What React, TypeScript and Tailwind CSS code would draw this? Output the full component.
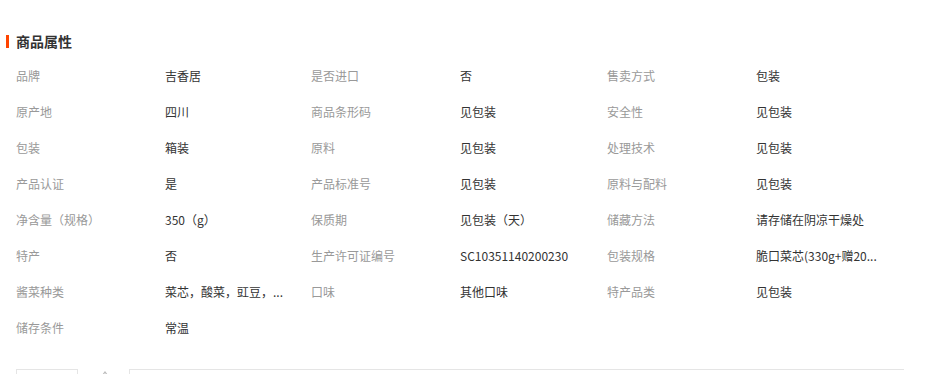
import React from 'react';

const rows: [string, string][][] = [
  [['品牌', '吉香居'], ['是否进口', '否'], ['售卖方式', '包装']],
  [['原产地', '四川'], ['商品条形码', '见包装'], ['安全性', '见包装']],
  [['包装', '箱装'], ['原料', '见包装'], ['处理技术', '见包装']],
  [['产品认证', '是'], ['产品标准号', '见包装'], ['原料与配料', '见包装']],
  [['净含量（规格）', '350（g）'], ['保质期', '见包装（天）'], ['储藏方法', '请存储在阴凉干燥处']],
  [['特产', '否'], ['生产许可证编号', 'SC10351140200230'], ['包装规格', '脆口菜芯(330g+赠20...']],
  [['酱菜种类', '菜芯，酸菜，豇豆，...'], ['口味', '其他口味'], ['特产品类', '见包装']],
  [['储存条件', '常温']],
];

export default function App() {
  return (
    <div
      className="w-[941px] h-[374px] overflow-hidden bg-white"
      style={{ fontFamily: '"Microsoft YaHei", "Noto Sans CJK SC", sans-serif' }}
    >
      {/* ── Title ─────────────────────────────── */}
      <div className="flex items-center h-[18px] mt-[32px]">
        <span className="w-[3px] h-[13px] bg-[#ff4400] ml-[6px]" />
        <span className="ml-[7px] text-[14px] font-bold text-[#333] leading-[18px]">商品属性</span>
      </div>

      {/* ── Attribute grid ────────────────────── */}
      <div className="mt-[8px] pl-[16px]">
        {rows.map((row, i) => (
          <div key={i} className="grid grid-cols-[149px_146px_149px_147px_149px_150px] h-[36px] items-center text-[12px] leading-[16px]">
            {row.map(([label, value]) => (
              <React.Fragment key={label}>
                <span className="text-[#999]">{label}</span>
                <span className="text-[#333] whitespace-nowrap">{value}</span>
              </React.Fragment>
            ))}
          </div>
        ))}
      </div>

      {/* ── Bottom tabs ───────────────────────── */}
      <div className="flex items-start mt-[23px] pl-[16px]">
        <div className="w-[62px] h-[20px] border-t border-l border-r border-[#e5e5e5]" />
        <svg className="ml-[23px] mt-[2px]" width="8" height="6" viewBox="0 0 8 6">
          <path d="M1 5 L4 1 L7 5" fill="none" stroke="#bbb" strokeWidth="1.2" />
        </svg>
        <div className="ml-[20px] w-[775px] h-[20px] border-t border-l border-[#e5e5e5]" />
      </div>
    </div>
  );
}
